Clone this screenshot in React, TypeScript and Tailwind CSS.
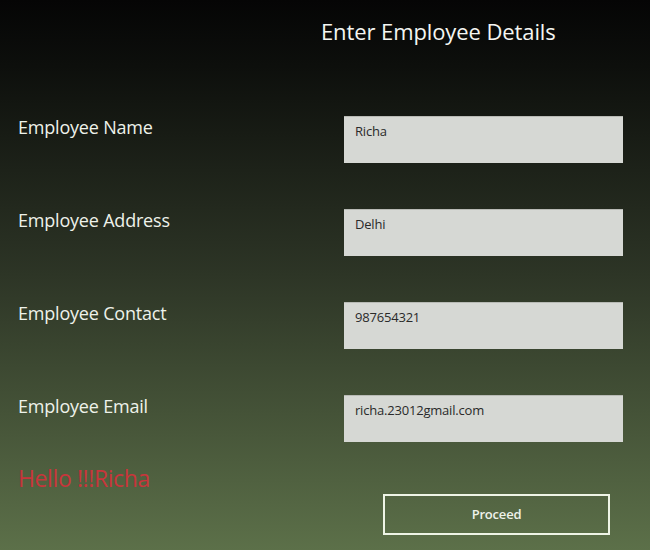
import React from "react";

const rows = [
  { label: "Employee Name", value: "Richa" },
  { label: "Employee Address", value: "Delhi" },
  { label: "Employee Contact", value: "987654321" },
  { label: "Employee Email", value: "richa.23012gmail.com" },
];

export default function App() {
  return (
    <div
      className="w-[650px] h-[550px] overflow-hidden bg-[linear-gradient(to_bottom,#050505_0%,#0d0f0c_12%,#2d3526_50%,#5c7049_100%)] text-[#eef2ea]"
      style={{ fontFamily: '"Open Sans", "Noto Sans", sans-serif' }}
    >
      <div className="pl-[321px] pt-[16px] h-[116px]">
        <h1 className="text-[22px] leading-[30px] tracking-[-0.1px] text-[#f4f6f2]">
          Enter Employee Details
        </h1>
      </div>
      <div className="flex flex-col gap-[46px]">
        {rows.map((r) => (
          <div key={r.label} className="flex h-[47px]">
            <div className="w-[344px] pl-[18px] text-[18px] leading-[22px] tracking-[-0.2px] text-[#eef2ea]">
              {r.label}
            </div>
            <div className="w-[279px] h-[47px] bg-[#d6d8d4] border-t border-[#b8bab5] pl-[11px] pt-[5px] text-[13px] leading-[18px] tracking-[-0.2px] text-[#2a2a2a]">
              {r.value}
            </div>
          </div>
        ))}
      </div>
      <div className="flex mt-[16px]">
        <div className="w-[383px] pl-[18px] pt-[6px] text-[23px] leading-[28px] tracking-[-0.4px] text-[#c8353b]">
          Hello !!!Richa
        </div>
        <div className="mt-[36px] w-[227px] h-[41px] border-2 border-[#eef4e6] flex items-center justify-center text-[13px] font-semibold text-[#eef2ea] tracking-[-0.2px]">
          Proceed
        </div>
      </div>
    </div>
  );
}
